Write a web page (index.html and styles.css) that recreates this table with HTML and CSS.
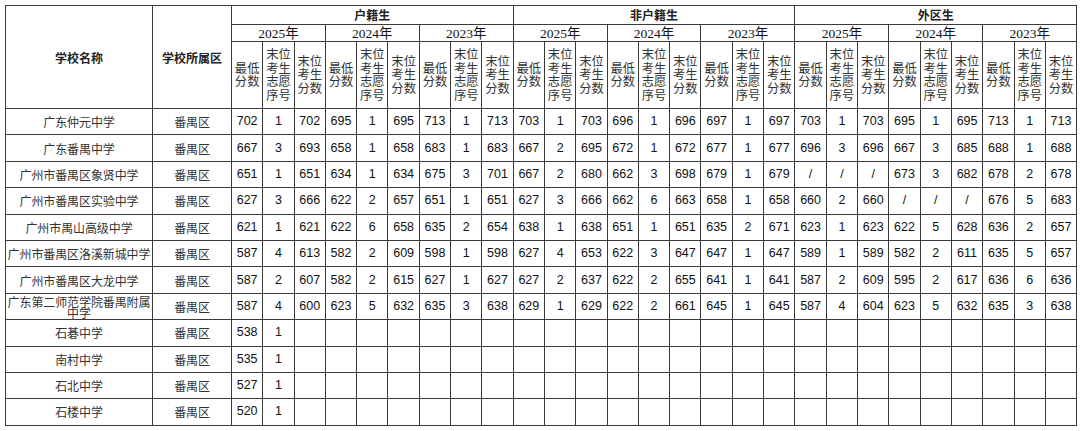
FILE: index.html
```html
<!DOCTYPE html>
<html lang="zh-CN">
<head>
<meta charset="utf-8">
<title>番禺区学校分数线</title>
<link rel="stylesheet" href="styles.css">
</head>
<body>
<table class="score-table">
  <colgroup>
    <col class="c-name"><col class="c-dist">
    <col class="c-d"><col class="c-d"><col class="c-d"><col class="c-d"><col class="c-d"><col class="c-d"><col class="c-d"><col class="c-d"><col class="c-d">
    <col class="c-d"><col class="c-d"><col class="c-d"><col class="c-d"><col class="c-d"><col class="c-d"><col class="c-d"><col class="c-d"><col class="c-d">
    <col class="c-d"><col class="c-d"><col class="c-d"><col class="c-d"><col class="c-d"><col class="c-d"><col class="c-d"><col class="c-d"><col class="c-d">
  </colgroup>
  <thead>
    <tr class="h-group">
      <th rowspan="3" class="h-main">学校名称</th>
      <th rowspan="3" class="h-main">学校所属区</th>
      <th colspan="9" class="h-cat">户籍生</th>
      <th colspan="9" class="h-cat">非户籍生</th>
      <th colspan="9" class="h-cat">外区生</th>
    </tr>
    <tr class="h-year">
      <th colspan="3">2025年</th><th colspan="3">2024年</th><th colspan="3">2023年</th>
      <th colspan="3">2025年</th><th colspan="3">2024年</th><th colspan="3">2023年</th>
      <th colspan="3">2025年</th><th colspan="3">2024年</th><th colspan="3">2023年</th>
    </tr>
    <tr class="h-sub">
      <th>最低分数</th><th>末位考生志愿序号</th><th>末位考生分数</th>
      <th>最低分数</th><th>末位考生志愿序号</th><th>末位考生分数</th>
      <th>最低分数</th><th>末位考生志愿序号</th><th>末位考生分数</th>
      <th>最低分数</th><th>末位考生志愿序号</th><th>末位考生分数</th>
      <th>最低分数</th><th>末位考生志愿序号</th><th>末位考生分数</th>
      <th>最低分数</th><th>末位考生志愿序号</th><th>末位考生分数</th>
      <th>最低分数</th><th>末位考生志愿序号</th><th>末位考生分数</th>
      <th>最低分数</th><th>末位考生志愿序号</th><th>末位考生分数</th>
      <th>最低分数</th><th>末位考生志愿序号</th><th>末位考生分数</th>
    </tr>
  </thead>
  <tbody>
    <tr><td class="name">广东仲元中学</td><td class="dist">番禺区</td>
      <td>702</td><td>1</td><td>702</td><td>695</td><td>1</td><td>695</td><td>713</td><td>1</td><td>713</td>
      <td>703</td><td>1</td><td>703</td><td>696</td><td>1</td><td>696</td><td>697</td><td>1</td><td>697</td>
      <td>703</td><td>1</td><td>703</td><td>695</td><td>1</td><td>695</td><td>713</td><td>1</td><td>713</td></tr>
    <tr><td class="name">广东番禺中学</td><td class="dist">番禺区</td>
      <td>667</td><td>3</td><td>693</td><td>658</td><td>1</td><td>658</td><td>683</td><td>1</td><td>683</td>
      <td>667</td><td>2</td><td>695</td><td>672</td><td>1</td><td>672</td><td>677</td><td>1</td><td>677</td>
      <td>696</td><td>3</td><td>696</td><td>667</td><td>3</td><td>685</td><td>688</td><td>1</td><td>688</td></tr>
    <tr><td class="name">广州市番禺区象贤中学</td><td class="dist">番禺区</td>
      <td>651</td><td>1</td><td>651</td><td>634</td><td>1</td><td>634</td><td>675</td><td>3</td><td>701</td>
      <td>667</td><td>2</td><td>680</td><td>662</td><td>3</td><td>698</td><td>679</td><td>1</td><td>679</td>
      <td>/</td><td>/</td><td>/</td><td>673</td><td>3</td><td>682</td><td>678</td><td>2</td><td>678</td></tr>
    <tr><td class="name">广州市番禺区实验中学</td><td class="dist">番禺区</td>
      <td>627</td><td>3</td><td>666</td><td>622</td><td>2</td><td>657</td><td>651</td><td>1</td><td>651</td>
      <td>627</td><td>3</td><td>666</td><td>662</td><td>6</td><td>663</td><td>658</td><td>1</td><td>658</td>
      <td>660</td><td>2</td><td>660</td><td>/</td><td>/</td><td>/</td><td>676</td><td>5</td><td>683</td></tr>
    <tr><td class="name">广州市禺山高级中学</td><td class="dist">番禺区</td>
      <td>621</td><td>1</td><td>621</td><td>622</td><td>6</td><td>658</td><td>635</td><td>2</td><td>654</td>
      <td>638</td><td>1</td><td>638</td><td>651</td><td>1</td><td>651</td><td>635</td><td>2</td><td>671</td>
      <td>623</td><td>1</td><td>623</td><td>622</td><td>5</td><td>628</td><td>636</td><td>2</td><td>657</td></tr>
    <tr><td class="name">广州市番禺区洛溪新城中学</td><td class="dist">番禺区</td>
      <td>587</td><td>4</td><td>613</td><td>582</td><td>2</td><td>609</td><td>598</td><td>1</td><td>598</td>
      <td>627</td><td>4</td><td>653</td><td>622</td><td>3</td><td>647</td><td>647</td><td>1</td><td>647</td>
      <td>589</td><td>1</td><td>589</td><td>582</td><td>2</td><td>611</td><td>635</td><td>5</td><td>657</td></tr>
    <tr><td class="name">广州市番禺区大龙中学</td><td class="dist">番禺区</td>
      <td>587</td><td>2</td><td>607</td><td>582</td><td>2</td><td>615</td><td>627</td><td>1</td><td>627</td>
      <td>627</td><td>2</td><td>637</td><td>622</td><td>2</td><td>655</td><td>641</td><td>1</td><td>641</td>
      <td>587</td><td>2</td><td>609</td><td>595</td><td>2</td><td>617</td><td>636</td><td>6</td><td>636</td></tr>
    <tr><td class="name tight">广东第二师范学院番禺附属中学</td><td class="dist">番禺区</td>
      <td>587</td><td>4</td><td>600</td><td>623</td><td>5</td><td>632</td><td>635</td><td>3</td><td>638</td>
      <td>629</td><td>1</td><td>629</td><td>622</td><td>2</td><td>661</td><td>645</td><td>1</td><td>645</td>
      <td>587</td><td>4</td><td>604</td><td>623</td><td>5</td><td>632</td><td>635</td><td>3</td><td>638</td></tr>
    <tr><td class="name">石碁中学</td><td class="dist">番禺区</td>
      <td>538</td><td>1</td><td></td><td></td><td></td><td></td><td></td><td></td><td></td>
      <td></td><td></td><td></td><td></td><td></td><td></td><td></td><td></td><td></td>
      <td></td><td></td><td></td><td></td><td></td><td></td><td></td><td></td><td></td></tr>
    <tr><td class="name">南村中学</td><td class="dist">番禺区</td>
      <td>535</td><td>1</td><td></td><td></td><td></td><td></td><td></td><td></td><td></td>
      <td></td><td></td><td></td><td></td><td></td><td></td><td></td><td></td><td></td>
      <td></td><td></td><td></td><td></td><td></td><td></td><td></td><td></td><td></td></tr>
    <tr><td class="name">石北中学</td><td class="dist">番禺区</td>
      <td>527</td><td>1</td><td></td><td></td><td></td><td></td><td></td><td></td><td></td>
      <td></td><td></td><td></td><td></td><td></td><td></td><td></td><td></td><td></td>
      <td></td><td></td><td></td><td></td><td></td><td></td><td></td><td></td><td></td></tr>
    <tr><td class="name">石楼中学</td><td class="dist">番禺区</td>
      <td>520</td><td>1</td><td></td><td></td><td></td><td></td><td></td><td></td><td></td>
      <td></td><td></td><td></td><td></td><td></td><td></td><td></td><td></td><td></td>
      <td></td><td></td><td></td><td></td><td></td><td></td><td></td><td></td><td></td></tr>
  </tbody>
</table>
</body>
</html>
```

FILE: styles.css
```css
html, body {
  margin: 0;
  padding: 0;
  background: #ffffff;
}

body {
  padding: 5px 0 0 5px;
}

.score-table {
  border-collapse: collapse;
  table-layout: fixed;
  width: 1071px;
  font-family: "Liberation Sans", "Noto Sans CJK SC", sans-serif;
  font-size: 12.5px;
  color: #111;
}

.c-name { width: 147px; }
.c-dist { width: 79px; }
.c-d { width: 31.3px; }

.score-table th,
.score-table td {
  border: 1px solid #3a3a3a;
  padding: 0;
  text-align: center;
  vertical-align: middle;
  overflow: hidden;
}

.score-table th {
  font-family: "Noto Sans CJK SC", sans-serif;
  color: #222;
}

.h-main {
  font-size: 12px;
  font-weight: 600;
}

.h-group { height: 19px; }
.h-group .h-cat {
  font-size: 12px;
  font-weight: 600;
  line-height: 16px;
}

.h-year { height: 17px; }
.h-year th {
  font-family: "Liberation Serif", "Noto Sans CJK SC", serif;
  font-size: 13.5px;
  font-weight: 400;
  line-height: 15px;
  color: #111;
}

.h-sub { height: 67px; }
.h-sub th {
  font-size: 12.3px;
  font-weight: 400;
  line-height: 13.5px;
  padding: 0 2px;
  color: #333;
}

.score-table tbody tr { height: 26.4px; }

.score-table td {
  line-height: 15px;
}

.score-table td.name,
.score-table td.dist {
  font-family: "Noto Sans CJK SC", sans-serif;
  font-size: 12px;
  color: #333;
  letter-spacing: -0.1px;
}

.score-table td.name.tight {
  line-height: 11px;
  padding-top: 2px;
}
```
